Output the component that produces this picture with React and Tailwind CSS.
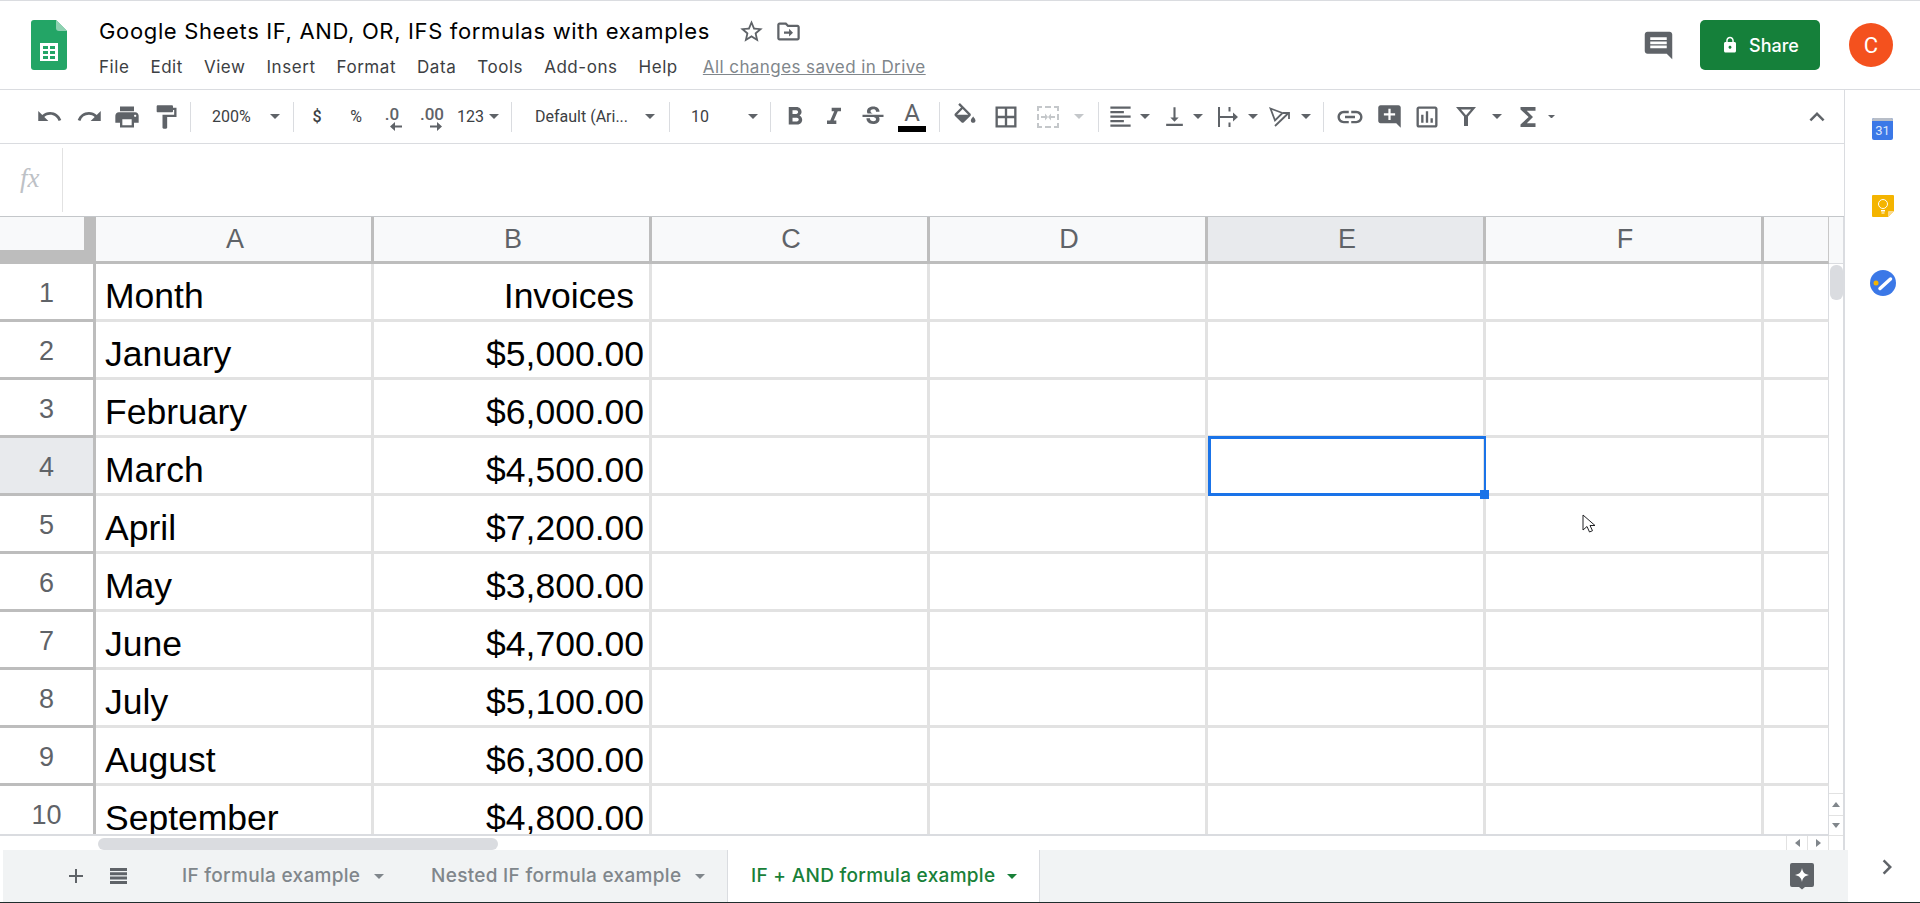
// App.jsx - Google Sheets window
import React from "react";
import {
  MdUndo,
  MdRedo,
  MdPrint,
  MdFormatPaint,
  MdFormatBold,
  MdFormatItalic,
  MdStrikethroughS,
  MdBorderAll,
  MdFormatAlignLeft,
  MdVerticalAlignBottom,
  MdLink,
  MdAddComment,
  MdOutlineInsertChart,
  MdFunctions,
  MdExpandLess,
  MdChevronRight,
  MdComment,
  MdLock,
  MdStarBorder,
  MdAdd,
} from "react-icons/md";

const rows = [
  ["Month", "Invoices"],
  ["January", "$5,000.00"],
  ["February", "$6,000.00"],
  ["March", "$4,500.00"],
  ["April", "$7,200.00"],
  ["May", "$3,800.00"],
  ["June", "$4,700.00"],
  ["July", "$5,100.00"],
  ["August", "$6,300.00"],
  ["September", "$4,800.00"],
];
const columns = ["A", "B", "C", "D", "E", "F"];
const menus = ["File", "Edit", "View", "Insert", "Format", "Data", "Tools", "Add-ons", "Help"];

/* ---------------- SMALL PIECES ---------------- */
const Slot = ({ className = "", children }) => (
  <div className={`flex shrink-0 items-center justify-center ${className}`}>{children}</div>
);

const Caret = ({ className = "", color = "#5f6368", size = 10 }) => (
  <div className={`flex shrink-0 justify-center ${className}`}>
    <svg width={size} height={size / 2} viewBox="0 0 10 5" fill={color}>
      <path d="M0 0h10L5 5z" />
    </svg>
  </div>
);

const Divider = ({ className = "" }) => (
  <div className={`flex h-[30px] w-[4px] shrink-0 justify-center ${className}`}>
    <div className="h-full w-px bg-[#dadce0]" />
  </div>
);

const Logo = () => (
  <svg width="36" height="50" viewBox="0 0 36 50" className="shrink-0">
    <path d="M3 0h22l11 11v36a3 3 0 0 1-3 3H3a3 3 0 0 1-3-3V3a3 3 0 0 1 3-3z" fill="#23a566" />
    <path d="M25 0l11 11H28a3 3 0 0 1-3-3z" fill="#8ed1b1" />
    <path d="M9 23h18v18H9z" fill="#fff" />
    <path d="M12 26h5v3h-5zM19 26h5v3h-5zM12 31h5v3h-5zM19 31h5v3h-5zM12 36h5v3h-5zM19 36h5v3h-5z" fill="#23a566" />
  </svg>
);

const FolderMove = () => (
  <svg width="27" height="27" viewBox="0 0 24 24" fill="#5f6368">
    <path d="M20 6h-8l-2-2H4c-1.100 0-2 .9-2 2v12c0 1.100.9 2 2 2h16c1.100 0 2-.9 2-2V8c0-1.100-.9-2-2-2zm0 12H4V6h5.170l2 2H20v10z" />
    <path d="M12.500 9.500l3.500 3.500-3.500 3.500V14H8v-2h4.500z" />
  </svg>
);

const FillIcon = () => (
  <svg width="28" height="28" viewBox="0 0 24 24" fill="#5f6368">
    <path d="M16.560 8.940L7.620 0 6.210 1.410l2.380 2.380-5.150 5.150c-.59.59-.59 1.540 0 2.120l5.500 5.500c.29.29.68.44 1.060.44s.77-.15 1.060-.44l5.500-5.500c.59-.58.59-1.530 0-2.120zM5.210 10L10 5.210 14.790 10H5.210zM19 11.500s-2 2.170-2 3.500c0 1.100.9 2 2 2s2-.9 2-2c0-1.330-2-3.500-2-3.500z" />
  </svg>
);

const MergeIcon = () => (
  <svg width="24" height="24" viewBox="0 0 24 24" fill="#c4c7ca">
    <path d="M1 1h5v2H3v3H1zM18 1h5v5h-2V3h-3zM1 18h2v3h3v2H1zM21 18h2v5h-5v-2h3zM9 1h6v2H9zM9 21h6v2H9zM1 9h2v6H1zM21 9h2v6h-2z" />
    <path d="M5 11h4V8.500l3 3.500-3 3.500V13H5zM19 11h-4V8.500L12 12l3 3.500V13h4z" />
  </svg>
);

const WrapIcon = () => (
  <svg width="20" height="20" viewBox="0 0 20 20" fill="#5f6368">
    <path d="M0 0h2v20H0zM10.500 0h2v4.500h-2zM10.500 15.500h2V20h-2zM2 9h13V5.500l5 4.500-5 4.500V11H2z" />
  </svg>
);

const RotateIcon = () => (
  <svg width="21" height="20" viewBox="0 0 21 20" fill="none" stroke="#5f6368" strokeWidth="1.800">
    <path d="M1.500 1.500l12 4.500-7.500 7.500z" />
    <path d="M6 19L19 6.500" />
    <path d="M14 6h6v6" />
  </svg>
);

const FilterIcon = () => (
  <svg width="20" height="19" viewBox="0 0 20 19" fill="#5f6368" fillRule="evenodd">
    <path d="M0 0h20l-8 9.500V19H8V9.500zM5 2.500h10l-5 5.800z" />
  </svg>
);

const SheetList = () => (
  <svg width="17" height="16" viewBox="0 0 17 16" fill="#5f6368">
    <path d="M0 0h17v3H0zM0 4.300h17v3H0zM0 8.600h17v3H0zM0 13h17v3H0z" />
  </svg>
);

const DecimalIcon = ({ label, right }) => (
  <div className="mt-[2px] flex flex-col items-center leading-none">
    <span className="text-[17px] leading-[18px] font-medium text-[#5f6368]">{label}</span>
    <svg width="12" height="9" viewBox="0 0 12 9" fill="#5f6368" className={right ? "-mt-[1px] ml-[8px]" : "-mt-[1px] ml-[8px] rotate-180"}>
      <path d="M0 3.500h7V0l5 4.500L7 9V5.500H0z" />
    </svg>
  </div>
);

const Calendar = () => (
  <div className="flex h-[22px] w-[21px] flex-col overflow-hidden rounded-[2px] bg-[#3b78e7]">
    <div className="h-[3px] bg-[#b8bec8]" />
    <div className="flex-1 text-center text-[13px] leading-[19px] text-[#dbe6fb]">31</div>
  </div>
);

const Keep = () => (
  <svg width="22" height="22" viewBox="0 0 22 22">
    <path d="M1 0h20a1 1 0 0 1 1 1v15l-6 6H1a1 1 0 0 1-1-1V1a1 1 0 0 1 1-1z" fill="#f4b400" />
    <path d="M22 16h-5a1 1 0 0 0-1 1v5z" fill="#fbd98c" />
    <circle cx="11" cy="9" r="4.500" fill="none" stroke="#fff" strokeWidth="1" />
    <path d="M9 15h4v1.500H9zM9.500 17.500h3v1h-3z" fill="#fff" />
  </svg>
);

const Tasks = () => (
  <svg width="26" height="26" viewBox="0 0 26 26">
    <circle cx="13" cy="13" r="13" fill="#3b78e7" />
    <path d="M10 18.500L20.500 9" stroke="#fff" strokeWidth="3.500" strokeLinecap="round" />
    <circle cx="6" cy="13" r="2.500" fill="#f4b400" />
  </svg>
);

const Explore = () => (
  <svg width="26" height="28" viewBox="0 0 26 28">
    <path d="M3 1h20a2 2 0 0 1 2 2v20a2 2 0 0 1-2 2h-7l-3 2.500L10 25H3a2 2 0 0 1-2-2V3a2 2 0 0 1 2-2z" fill="#5f6368" />
    <path d="M13 6c.8 4 2.200 6 7 7-4.800 1-6.200 3-7 7-.8-4-2.200-6-7-7 4.800-1 6.200-3 7-7z" fill="#fff" />
  </svg>
);

/* ---------------- HEADER ---------------- */
const Header = () => (
  <header className="flex h-[90px] shrink-0 items-start border-t border-b border-t-[#dadce0] border-b-[#dadce0] pt-[19px] pl-[31px]">
    <Logo />
    <div className="ml-[32px] flex flex-col">
      <div className="-mt-[2px] flex h-[26px] items-center">
        <span className="w-[610px] font-[Inter,sans-serif] text-[22px] leading-[26px] tracking-[0.65px] whitespace-nowrap text-black">
          Google Sheets IF, AND, OR, IFS formulas with examples
        </span>
        <MdStarBorder size={27} className="ml-[29px] text-[#5f6368]" />
        <div className="ml-[10px]">
          <FolderMove />
        </div>
      </div>
      <div className="mt-[12px] flex items-center gap-[21px] font-[Inter,sans-serif] text-[17px] leading-[22px] tracking-[0.55px] text-[#3c4043]">
        {menus.map((m) => (
          <span key={m}>{m}</span>
        ))}
        <span className="ml-[4px] tracking-[0.42px] text-[#80868b] underline">All changes saved in Drive</span>
      </div>
    </div>
    <div className="ml-auto flex items-center pr-[27px]">
      <MdComment size={33} className="text-[#5f6368]" />
      <button className="ml-[25px] flex h-[50px] w-[120px] items-center justify-center gap-[10px] rounded-[5px] bg-[#15803a] font-[Inter,sans-serif] text-[18px] font-medium text-white">
        <MdLock size={18} />
        Share
      </button>
      <div className="ml-[29px] flex h-[44px] w-[44px] items-center justify-center rounded-full bg-[#f4511e] text-[22px] text-white">
        C
      </div>
    </div>
  </header>
);

/* ---------------- TOOLBAR ---------------- */
const Toolbar = () => (
  <div className="flex h-[54px] shrink-0 items-center border-b border-[#dadce0] pl-[30px] text-[16px] text-[#3c4043]">
    <Slot className="w-[38px]"><MdUndo size={27} className="text-[#5f6368]" /></Slot>
    <Slot className="w-[42px]"><MdRedo size={27} className="text-[#5f6368]" /></Slot>
    <Slot className="w-[34px]"><MdPrint size={28} className="text-[#5f6368]" /></Slot>
    <Slot className="w-[44px]"><MdFormatPaint size={28} className="text-[#5f6368]" /></Slot>
    <Divider />
    <div className="w-[70px] shrink-0 pl-[20px]">200%</div>
    <Caret className="mr-[3px] w-[26px]" />
    <Divider />
    <Slot className="w-[44px] font-medium">$</Slot>
    <Slot className="w-[34px]">%</Slot>
    <Slot className="w-[38px]"><DecimalIcon label=".0" /></Slot>
    <Slot className="w-[42px]"><DecimalIcon label=".00" right /></Slot>
    <Slot className="w-[35px]">123</Slot>
    <Caret className="mr-[9px] w-[12px]" />
    <Divider />
    <div className="w-[127px] shrink-0 pl-[22px] whitespace-nowrap">Default (Ari...</div>
    <Caret className="mr-[7px] w-[20px]" />
    <Divider />
    <div className="w-[72px] shrink-0 pl-[20px]">10</div>
    <Caret className="mr-[5px] w-[20px]" />
    <Divider className="mr-[3px]" />
    <Slot className="w-[40px]"><MdFormatBold size={30} className="text-[#5f6368]" /></Slot>
    <Slot className="w-[38px]"><MdFormatItalic size={28} className="text-[#5f6368]" /></Slot>
    <Slot className="w-[40px]"><MdStrikethroughS size={28} className="text-[#5f6368]" /></Slot>
    <Slot className="w-[38px] flex-col">
      <span className="text-[24px] leading-[24px] text-[#5f6368]">A</span>
      <div className="mt-[1px] h-[6px] w-[28px] bg-black" />
    </Slot>
    <Divider className="ml-[6px]" />
    <Slot className="w-[48px]"><FillIcon /></Slot>
    <Slot className="w-[34px]"><MdBorderAll size={28} className="text-[#5f6368]" /></Slot>
    <Slot className="w-[50px]"><MergeIcon /></Slot>
    <Caret className="mr-[11px] w-[12px]" color="#c4c7ca" />
    <Divider />
    <Slot className="w-[40px]"><MdFormatAlignLeft size={27} className="text-[#5f6368]" /></Slot>
    <Caret className="mr-[5px] w-[10px]" />
    <Slot className="w-[38px]"><MdVerticalAlignBottom size={25} className="text-[#5f6368]" /></Slot>
    <Caret className="mr-[5px] w-[10px]" />
    <Slot className="w-[40px]"><WrapIcon /></Slot>
    <Caret className="w-[10px]" />
    <Slot className="w-[43px]"><RotateIcon /></Slot>
    <Caret className="mr-[10px] w-[10px]" />
    <Divider />
    <Slot className="w-[50px]"><MdLink size={30} className="text-[#5f6368]" /></Slot>
    <Slot className="w-[28px]"><MdAddComment size={27} className="text-[#5f6368]" /></Slot>
    <Slot className="w-[48px]"><MdOutlineInsertChart size={28} className="text-[#5f6368]" /></Slot>
    <Slot className="w-[30px]"><FilterIcon /></Slot>
    <Caret className="ml-[11px] w-[10px]" />
    <Slot className="ml-[10px] w-[32px]"><MdFunctions size={30} className="text-[#5f6368]" /></Slot>
    <Caret className="ml-[2px] w-[10px]" size={7} />
    <Slot className="mr-[12px] ml-auto w-[30px]"><MdExpandLess size={32} className="text-[#5f6368]" /></Slot>
  </div>
);

/* ---------------- SHEET ---------------- */
const Sheet = () => (
  <div className="relative w-[1829px] shrink-0 font-['Liberation_Sans',Arial,sans-serif]">
    <div className="flex h-[47px]">
      <div className="h-[47px] w-[96px] shrink-0 bg-[#bdbdbd]">
        <div className="h-[33px] w-[84px] bg-[#f8f9fa]" />
      </div>
      {columns.map((c) => (
        <div
          key={c}
          className={`flex w-[278px] shrink-0 items-center justify-center border-r-[3px] border-b-[3px] border-[#bdbdbd] pt-[1px] pl-[3px] text-[27px] text-[#5f6368] ${
            c === "E" ? "bg-[#e8eaed]" : "bg-[#f8f9fa]"
          }`}
        >
          {c}
        </div>
      ))}
      <div className="w-[65px] border-r border-b-[3px] border-r-[#c8c8c8] border-b-[#bdbdbd] bg-[#f8f9fa]" />
    </div>
    <div className="h-[572px] overflow-hidden border-b-2 border-[#dadce0]">
      {rows.map((row, i) => (
        <div key={row[0]} className="flex h-[58px] shrink-0">
          <div
            className={`flex w-[96px] shrink-0 items-center justify-center border-r-[3px] border-b-[3px] border-[#bdbdbd] pt-[4px] text-[27px] text-[#5f6368] ${
              i === 3 ? "bg-[#e8eaed]" : "bg-white"
            }`}
          >
            {i + 1}
          </div>
          {columns.map((c, j) => (
            <div
              key={c}
              className={`relative flex w-[278px] shrink-0 items-end border-r-[3px] border-b-[3px] border-[#e2e2e2] pb-[3px] text-[35.5px] leading-[40px] text-black ${
                j === 1 ? "justify-end" : "justify-start"
              } ${j === 0 ? "pl-[9px]" : ""} ${j === 1 && i === 0 ? "pr-[15px]" : ""} ${j === 1 && i > 0 ? "pr-[5px]" : ""}`}
            >
              {j < 2 ? row[j] : null}
              {i === 3 && c === "E" && (
                <div className="absolute -top-[2px] -right-[3px] -bottom-[3px] left-0 z-10 border-[3px] border-r-2 border-[#1a73e8]">
                  <div className="absolute -right-[5px] -bottom-[6px] h-[9px] w-[9px] bg-[#1a73e8]" />
                </div>
              )}
            </div>
          ))}
          <div className="w-[65px] shrink-0 border-r border-b-[3px] border-r-[#dadce0] border-b-[#e2e2e2]" />
        </div>
      ))}
    </div>
    {/* mouse pointer */}
    <svg width="14" height="20" viewBox="0 0 14 20" className="absolute top-[297px] left-[1582px] z-10">
      <path d="M1 1v15l4-3.500 2.500 5.500 3-1.300L8 11.500h5z" fill="#fff" stroke="#202124" strokeWidth="1" />
    </svg>
  </div>
);

const VScroll = () => (
  <div className="flex w-[15px] shrink-0 flex-col border-r border-[#dadce0]">
    <div className="h-[47px] border-b border-[#dadce0] bg-[#f8f9fa]" />
    <div className="mt-[1px] ml-[1px] h-[35px] w-[13px] rounded-[6px] bg-[#dadce0]" />
    <div className="mt-auto flex h-[22px] items-center justify-center border-t border-[#e2e2e2]">
      <svg width="8" height="5" viewBox="0 0 8 5" fill="#80868b"><path d="M0 5h8L4 0z" /></svg>
    </div>
    <div className="flex h-[21px] items-center justify-center border-t border-b border-[#e2e2e2]">
      <svg width="8" height="5" viewBox="0 0 8 5" fill="#80868b"><path d="M0 0h8L4 5z" /></svg>
    </div>
  </div>
);

const HScroll = () => (
  <div className="flex h-[14px] shrink-0 items-stretch">
    <div className="mt-[2px] ml-[98px] w-[400px] rounded-[6px] bg-[#dadce0]" />
    <div className="ml-auto flex w-[43px] border-l border-[#e2e2e2]">
      <div className="flex w-[21px] items-center justify-center border-r border-[#e2e2e2]">
        <svg width="5" height="8" viewBox="0 0 5 8" fill="#80868b"><path d="M5 0v8L0 4z" /></svg>
      </div>
      <div className="flex w-[21px] items-center justify-center border-r border-[#e2e2e2]">
        <svg width="5" height="8" viewBox="0 0 5 8" fill="#80868b"><path d="M0 0v8l5-4z" /></svg>
      </div>
    </div>
    <div className="w-[15px] border-r border-[#dadce0]" />
  </div>
);

/* ---------------- TABS ---------------- */
const TabBar = () => (
  <div className="flex h-[53px] shrink-0 border-b border-[#1f2d2d]">
    <div className="ml-[3px] flex w-[1845px] items-center bg-[#f1f3f4] font-[Inter,sans-serif] text-[19px] font-medium tracking-[0.3px] whitespace-nowrap text-[#80868b]">
      <Slot className="ml-[58px] w-[30px]"><MdAdd size={24} className="text-[#5f6368]" /></Slot>
      <Slot className="ml-[12px] w-[30px]"><SheetList /></Slot>
      <span className="ml-[49px] w-[178px] pt-[1px]">IF formula example</span>
      <Caret className="ml-[14px] w-[10px]" color="#80868b" />
      <span className="ml-[47px] w-[250px] pt-[1px]">Nested IF formula example</span>
      <Caret className="ml-[14px] w-[10px]" color="#80868b" />
      <div className="ml-[22px] flex h-full w-[313px] items-center border-r border-l border-[#dadce0] bg-white pl-[23px] text-[#188038]">
        <span className="w-[243px] pt-[1px]">IF + AND formula example</span>
        <Caret className="ml-[13px] w-[10px]" color="#188038" />
      </div>
      <Slot className="mr-[33px] ml-auto w-[26px]"><Explore /></Slot>
    </div>
    <div className="flex flex-1 items-start justify-center pt-[1px] pl-[6px]">
      <MdChevronRight size={30} className="mt-[1px] text-[#5f6368]" />
    </div>
  </div>
);

const App = () => (
  <div className="flex h-[903px] w-[1920px] flex-col overflow-hidden bg-white font-[Roboto,sans-serif]">
    <Header />
    <div className="flex min-h-0 flex-1">
      <main className="flex w-[1844px] shrink-0 flex-col">
        <Toolbar />
        <div className="flex h-[73px] shrink-0 items-center border-b border-[#c4c7ca]">
          <div className="-mt-[4px] w-[62px] pl-[20px] font-['Liberation_Serif',serif] text-[27px] text-[#bdc1c6] italic">fx</div>
          <div className="h-[64px] w-px bg-[#e2e2e2]" />
        </div>
        <div className="flex h-[619px] shrink-0">
          <Sheet />
          <VScroll />
        </div>
        <HScroll />
      </main>
      <aside className="flex flex-1 flex-col items-center border-l border-[#dadce0] pt-[28px]">
        <Calendar />
        <div className="mt-[55px]"><Keep /></div>
        <div className="mt-[53px]"><Tasks /></div>
      </aside>
    </div>
    <TabBar />
  </div>
);

export default App;
